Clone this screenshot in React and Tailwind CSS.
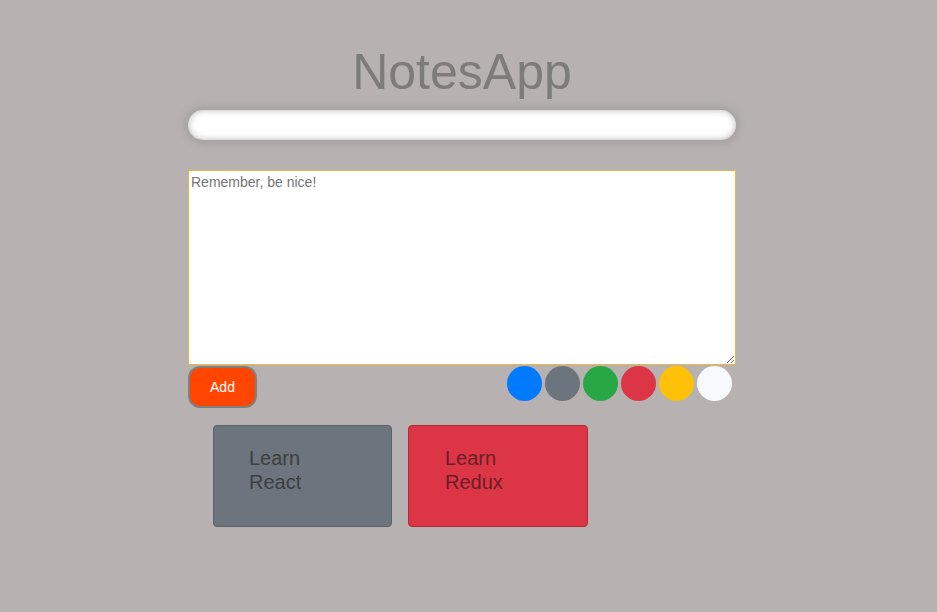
export default function App() {
  const colors = ["bg-[#007bff]", "bg-[#6c757d]", "bg-[#28a745]", "bg-[#dc3545]", "bg-[#ffc107]", "bg-[#f8f9fa]"];
  return (
    <div className="min-h-[612px] w-full bg-[#b7b1b1] font-['Liberation_Sans',Arial,sans-serif]">
      <div className="ml-[188px] flex w-[548px] flex-col pt-[42px]">
        <h1 className="text-center text-[50px] leading-[60px] text-[#7d7c7b]">NotesApp</h1>
        <input className="mt-[8px] h-[30px] w-full rounded-full bg-white px-3 shadow-[inset_0_0_7px_rgba(120,120,120,0.55),0_0_8px_2px_rgba(130,130,130,0.45)] outline-none" />
        <textarea
          placeholder="Remember, be nice!"
          className="mt-[30px] h-[195px] w-full border border-[#f0b53c] bg-white px-[2px] py-[2px] text-[14px] leading-[18px] text-[#333] placeholder:text-[#757575] outline-none"
        />
        <div className="flex items-start justify-between">
          <button className="mt-[1px] h-[42px] w-[69px] rounded-[12px] border-2 border-[#7f7f7f] bg-[#ff4500] text-[14px] text-white">Add</button>
          <div className="mr-[4px] mt-[1px] flex gap-[3px]">
            {colors.map((c, i) => (
              <div key={i} className={`h-[35px] w-[35px] rounded-full ${c}`} />
            ))}
          </div>
        </div>
        <div className="ml-[25px] mt-[17px] flex gap-[16px]">
          <div className="h-[102px] w-[179px] rounded-[4px] border border-[#5a626a] bg-[#6c757d] pl-[35px] pt-[20px]">
            <p className="w-[70px] text-[20px] leading-[24px] text-[#3d3f42]">Learn React</p>
          </div>
          <div className="h-[102px] w-[180px] rounded-[4px] border border-[#b02a37] bg-[#dc3545] pl-[36px] pt-[20px]">
            <p className="w-[70px] text-[20px] leading-[24px] text-[#6b1e28]">Learn Redux</p>
          </div>
        </div>
      </div>
    </div>
  );
}
